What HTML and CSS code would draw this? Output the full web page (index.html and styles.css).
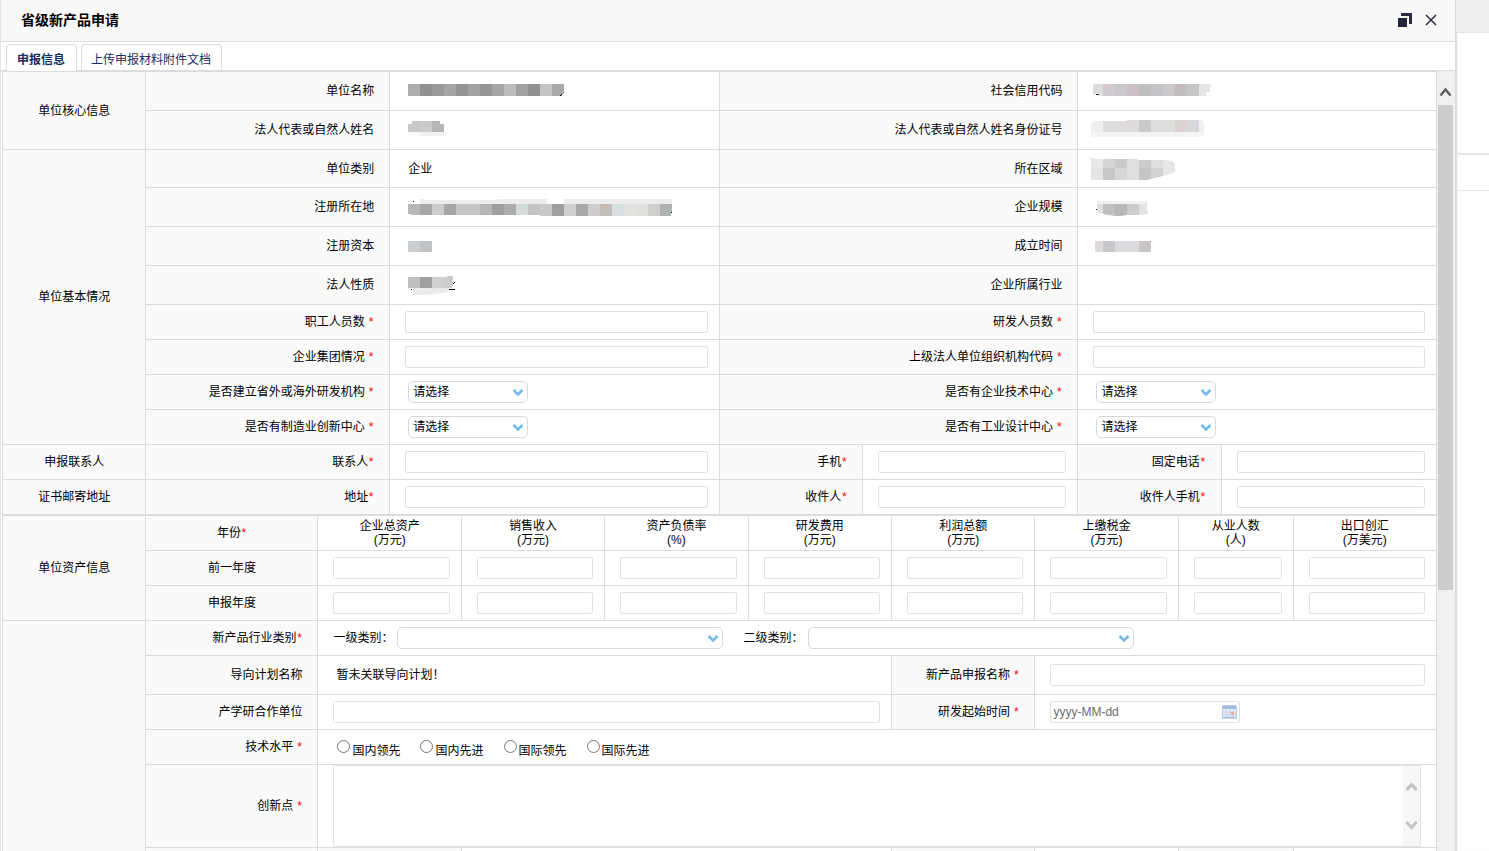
FILE: index.html
```html
<!DOCTYPE html>
<html lang="zh-CN">
<head>
<meta charset="utf-8">
<title>省级新产品申请</title>
<link rel="stylesheet" href="styles.css">
</head>
<body>
<div class="page">
<main class="dialog">
  <header class="dialog-head">
    <h1 class="dialog-title">省级新产品申请</h1>
    <div class="dialog-tools">
      <button class="tool" type="button" aria-label="还原">
        <svg width="14" height="14" viewBox="0 0 14 14"><path d="M3 0h11v11h-3V3H3z" fill="#2b2b3d"/><path d="M0 5h9v9H0z" fill="#23233a"/></svg>
      </button>
      <button class="tool" type="button" aria-label="关闭">
        <svg width="12" height="12" viewBox="0 0 12 12"><path d="M1 1l10 10M11 1L1 11" stroke="#2e2e3e" stroke-width="1.5" fill="none"/></svg>
      </button>
    </div>
  </header>
  <nav class="tabs">
    <button class="tab tab-on" type="button">申报信息</button>
    <button class="tab" type="button">上传申报材料附件文档</button>
  </nav>
  <div class="body">
    <form class="form">
      <table class="grid">
        <colgroup><col class="w10"><col class="w17"><col class="w23"><col class="w10"><col class="w15"><col class="w10"><col class="w15"></colgroup>
        <tr class="tall">
          <th class="group" rowspan="2">单位核心信息</th>
          <th class="label">单位名称</th>
          <td class="masked"><svg class="mosaic" width="280" height="24"><g><path fill="#adadad" d="M5 5h12v12H5z"/><path fill="#919191" d="M17 5h12v12H17z"/><path fill="#999" d="M29 5h12v12H29z"/><path fill="#a5a5a5" d="M41 5h12v12H41z"/><path fill="#949494" d="M53 5h12v12H53z"/><path fill="#a2a2a2" d="M65 5h12v12H65z"/><path fill="#969696" d="M77 5h12v12H77z"/><path fill="#a6a6a6" d="M89 5h12v12H89z"/><path fill="#bcbcbc" d="M101 5h12v12H101z"/><path fill="#a2a2a2" d="M113 5h12v12H113z"/><path fill="#919191" d="M125 5h12v12H125z"/><path fill="#c4c4c4" d="M137 5h12v12H137z"/><path fill="#a8a8a8" d="M149 5h12v10h-2v2H149z"/><path fill="#000" d="M157 16h1v1h-1zM158 15h1v1h-1z"/></g></svg></td>
          <th class="label" colspan="2">社会信用代码</th>
          <td class="masked" colspan="2"><svg class="mosaic" width="130" height="24"><path fill="#dedddf" d="M2 5h10v12H8v-2H2z"/><path fill="#d0cace" d="M12 5h12v12H12z"/><path fill="#c9c7cc" d="M24 5h12v12H24z"/><path fill="#cac0c6" d="M36 5h12v12H36z"/><path fill="#bebebe" d="M48 5h12v12H48z"/><path fill="#c4c4c9" d="M60 5h12v12H60z"/><path fill="#cacaca" d="M72 5h12v12H72z"/><path fill="#c2bcc0" d="M84 5h12v12H84z"/><path fill="#c5c6c8" d="M96 5h12v12H96z"/><path fill="#e5e6e8" d="M108 5h12v3h-1v5h-4v4h-7z"/><path fill="#222" d="M5 15h3v1H5z"/></svg></td>
        </tr>
        <tr class="tall">
          <th class="label">法人代表或自然人姓名</th>
          <td class="masked"><svg class="mosaic" width="280" height="24"><path fill="#c8c8c8" d="M5 6h4V3h8v11H5z"/><path fill="#cacaca" d="M17 3h12v11H17z"/><path fill="#b6b6b6" d="M29 3h8v3h4v8H29z"/><path fill="#fafafa" d="M5 14h12v4H5z"/><path fill="#f0f0f0" d="M17 14h24v4H17z"/></svg></td>
          <th class="label" colspan="2">法人代表或自然人姓名身份证号</th>
          <td class="masked" colspan="2"><svg class="mosaic" width="130" height="24"><path fill="#efeeef" d="M0 6l4-3h8v11H0z"/><path fill="#dcdddc" d="M12 3h24v11H12z"/><path fill="#dfdadc" d="M36 2h12v12H36z"/><path fill="#c8cac9" d="M48 2h12v12H48z"/><path fill="#dedde0" d="M60 2h24v12H60z"/><path fill="#dad3d2" d="M84 2h12v12H84z"/><path fill="#d7d7dc" d="M96 2h12v12H96z"/><path fill="#efefef" d="M108 2h4v5h1v7h-5z"/><path fill="#f4f4f4" d="M0 14h113v3h-1v2H0z"/></svg></td>
        </tr>
        <tr class="mid">
          <th class="group" rowspan="8">单位基本情况</th>
          <th class="label">单位类别</th>
          <td class="value">企业</td>
          <th class="label" colspan="2">所在区域</th>
          <td class="masked" colspan="2"><svg class="mosaic" width="130" height="24"><path fill="#e8e8e8" d="M0 1h3v1h9v9H0z"/><path fill="#d4d4d4" d="M12 2h12v9H12z"/><path fill="#cacaca" d="M24 2h12v9H24z"/><path fill="#dfdfdf" d="M36 2h11v1h1v20H36z"/><path fill="#cdcdcd" d="M48 3h12v8H48z"/><path fill="#dfdfdf" d="M60 3h12v8H60z"/><path fill="#e4e4e4" d="M0 11h12v12H0z"/><path fill="#c8c8c8" d="M12 11h12v12H12z"/><path fill="#d7d7d7" d="M24 11h12v12H24z"/><path fill="#c6c6c6" d="M48 11h12v11l-4 1h-8z"/><path fill="#d2d2d2" d="M60 11h12v8l-12 3z"/><path fill="#e6e6e6" d="M72 3l9 1 3 3v8l-12 4z"/></svg></td>
        </tr>
        <tr class="tall">
          <th class="label">注册所在地</th>
          <td class="masked"><svg class="mosaic" width="280" height="24"><path fill="#ececec" d="M17 4h5v1h72V4h50v5H17zM161 4h108v5H161z"/><path fill="#b8b8b8" d="M5 9h12v11H8v-1H5z"/><path fill="#a8a8a8" d="M17 9h12v11H17z"/><path fill="#ccc" d="M29 9h12v11H29z"/><path fill="#a6a6a6" d="M41 9h12v11H41z"/><path fill="#c5c5c5" d="M53 9h24v11H53z"/><path fill="#b6b6b6" d="M77 9h12v11H77z"/><path fill="#9f9f9f" d="M89 9h12v11H89z"/><path fill="#acacac" d="M101 9h12v11H101z"/><path fill="#d4d9da" d="M113 9h12v11H113z"/><path fill="#c4c4c4" d="M125 9h12v11H125z"/><path fill="#c8c8c8" d="M137 9h12v12H137z"/><path fill="#9f9f9f" d="M149 9h12v12H149z"/><path fill="#cfcfcf" d="M161 9h12v12H161z"/><path fill="#a8a8a8" d="M173 9h12v12H173z"/><path fill="#cecdcb" d="M185 9h12v12H185z"/><path fill="#c3beb8" d="M197 9h12v12H197z"/><path fill="#d8dfe0" d="M209 9h12v12H209z"/><path fill="#e2e3de" d="M221 9h12v12H221z"/><path fill="#dfe1dc" d="M233 9h12v12H233z"/><path fill="#cfcdcd" d="M245 9h12v12H245z"/><path fill="#b0b3b3" d="M257 9h12v9h-1v3H257z"/><path fill="#111" d="M10 6h1v1h-1zM268 17h1v1h-1z"/></svg></td>
          <th class="label" colspan="2">企业规模</th>
          <td class="masked" colspan="2"><svg class="mosaic" width="130" height="24"><path fill="#f1f1f1" d="M6 6h51v3H6z"/><path fill="#e0e0e0" d="M6 9h6v10l-6-1z"/><path fill="#c0c0c0" d="M12 9h12v12l-6-1-6-1z"/><path fill="#b7b7b7" d="M24 9h12v11l-6 1h-6z"/><path fill="#ccc" d="M36 9h12v11H36z"/><path fill="#e2e2e2" d="M48 9h8v7h1v3l-9 1z"/><path fill="#111" d="M5 14h1v1H5z"/></svg></td>
        </tr>
        <tr class="tall">
          <th class="label">注册资本</th>
          <td class="masked"><svg class="mosaic" width="280" height="24"><path fill="#c9cdcf" d="M5 7h12v11H5z"/><path fill="#bfc3c5" d="M17 7h12v11H17z"/></svg></td>
          <th class="label" colspan="2">成立时间</th>
          <td class="masked" colspan="2"><svg class="mosaic" width="130" height="24"><path fill="#dfdbdb" d="M4 7h8v11H4z"/><path fill="#c6c8cc" d="M12 7h12v11H12z"/><path fill="#dbd9db" d="M24 7h12v11H24z"/><path fill="#dadbde" d="M36 7h12v11H36z"/><path fill="#c9c5c7" d="M48 7h12v11H48z"/></svg></td>
        </tr>
        <tr class="tall">
          <th class="label">法人性质</th>
          <td class="masked"><svg class="mosaic" width="280" height="24"><path fill="#ebebeb" d="M9 15h37v4l-15 2-14 1H9z"/><path fill="#c0c0c0" d="M5 4h12v11H5z"/><path fill="#9f9f9f" d="M17 4h12v11H17z"/><path fill="#d0d0d0" d="M29 4h12v11H29z"/><path fill="#ccc" d="M41 4h3V3h6v10l-2 2h-7z"/><path fill="#000" d="M46 16h6v1h-6zM51 9h1v1h-1zM50 10h1v1h-1zM8 16h1v1H8z"/></svg></td>
          <th class="label" colspan="2">企业所属行业</th>
          <td class="value" colspan="2"></td>
        </tr>
        <tr class="row">
          <th class="label"><label for="staff">职工人员数 <i>*</i></label></th>
          <td><input class="field" id="staff" type="text"></td>
          <th class="label" colspan="2"><label for="rd-staff">研发人员数 <i>*</i></label></th>
          <td colspan="2"><input class="field" id="rd-staff" type="text"></td>
        </tr>
        <tr class="row">
          <th class="label"><label for="corp">企业集团情况 <i>*</i></label></th>
          <td><input class="field" id="corp" type="text"></td>
          <th class="label" colspan="2"><label for="parent">上级法人单位组织机构代码 <i>*</i></label></th>
          <td colspan="2"><input class="field" id="parent" type="text"></td>
        </tr>
        <tr class="row">
          <th class="label"><label for="overseas">是否建立省外或海外研发机构 <i>*</i></label></th>
          <td class="value"><span class="pick"><select id="overseas"><option>请选择</option></select><svg width="12" height="9" viewBox="0 0 12 9"><path d="M1.500 2l4.500 4.500L10.500 2"/></svg></span></td>
          <th class="label" colspan="2"><label for="tech">是否有企业技术中心 <i>*</i></label></th>
          <td class="value" colspan="2"><span class="pick"><select id="tech"><option>请选择</option></select><svg width="12" height="9" viewBox="0 0 12 9"><path d="M1.500 2l4.500 4.500L10.500 2"/></svg></span></td>
        </tr>
        <tr class="row">
          <th class="label"><label for="maker">是否有制造业创新中心 <i>*</i></label></th>
          <td class="value"><span class="pick"><select id="maker"><option>请选择</option></select><svg width="12" height="9" viewBox="0 0 12 9"><path d="M1.500 2l4.500 4.500L10.500 2"/></svg></span></td>
          <th class="label" colspan="2"><label for="design">是否有工业设计中心 <i>*</i></label></th>
          <td class="value" colspan="2"><span class="pick"><select id="design"><option>请选择</option></select><svg width="12" height="9" viewBox="0 0 12 9"><path d="M1.500 2l4.500 4.500L10.500 2"/></svg></span></td>
        </tr>
        <tr class="row">
          <th class="group">申报联系人</th>
          <th class="label"><label for="contact">联系人<i>*</i></label></th>
          <td><input class="field" id="contact" type="text"></td>
          <th class="label"><label for="mobile">手机<i>*</i></label></th>
          <td><input class="field" id="mobile" type="text"></td>
          <th class="label"><label for="phone">固定电话<i>*</i></label></th>
          <td><input class="field" id="phone" type="text"></td>
        </tr>
        <tr class="row">
          <th class="group">证书邮寄地址</th>
          <th class="label"><label for="address">地址<i>*</i></label></th>
          <td><input class="field" id="address" type="text"></td>
          <th class="label"><label for="receiver">收件人<i>*</i></label></th>
          <td><input class="field" id="receiver" type="text"></td>
          <th class="label"><label for="receiver-phone">收件人手机<i>*</i></label></th>
          <td><input class="field" id="receiver-phone" type="text"></td>
        </tr>
      </table>
      <table class="grid">
        <colgroup><col class="w10"><col class="w12"><col class="w10"><col class="w10"><col class="w10"><col class="w10"><col class="w10"><col class="w10"><col class="w8"><col class="w10"></colgroup>
        <tr class="row">
          <th class="group" rowspan="3">单位资产信息</th>
          <th class="group">年份<i>*</i></th>
          <th class="head">企业总资产<br>(万元)</th>
          <th class="head">销售收入<br>(万元)</th>
          <th class="head">资产负债率<br>(%)</th>
          <th class="head">研发费用<br>(万元)</th>
          <th class="head">利润总额<br>(万元)</th>
          <th class="head">上缴税金<br>(万元)</th>
          <th class="head">从业人数<br>(人)</th>
          <th class="head">出口创汇<br>(万美元)</th>
        </tr>
        <tr class="row">
          <th class="group">前一年度</th>
          <td><input class="field" type="text" aria-label="前一年度企业总资产"></td>
          <td><input class="field" type="text" aria-label="前一年度销售收入"></td>
          <td><input class="field" type="text" aria-label="前一年度资产负债率"></td>
          <td><input class="field" type="text" aria-label="前一年度研发费用"></td>
          <td><input class="field" type="text" aria-label="前一年度利润总额"></td>
          <td><input class="field" type="text" aria-label="前一年度上缴税金"></td>
          <td><input class="field" type="text" aria-label="前一年度从业人数"></td>
          <td><input class="field" type="text" aria-label="前一年度出口创汇"></td>
        </tr>
        <tr class="row">
          <th class="group">申报年度</th>
          <td><input class="field" type="text" aria-label="申报年度企业总资产"></td>
          <td><input class="field" type="text" aria-label="申报年度销售收入"></td>
          <td><input class="field" type="text" aria-label="申报年度资产负债率"></td>
          <td><input class="field" type="text" aria-label="申报年度研发费用"></td>
          <td><input class="field" type="text" aria-label="申报年度利润总额"></td>
          <td><input class="field" type="text" aria-label="申报年度上缴税金"></td>
          <td><input class="field" type="text" aria-label="申报年度从业人数"></td>
          <td><input class="field" type="text" aria-label="申报年度出口创汇"></td>
        </tr>
        <tr class="row">
          <th class="group" rowspan="6"></th>
          <th class="label">新产品行业类别<i>*</i></th>
          <td colspan="8">
            <div class="cats">
              <div class="cat"><label for="cat1">一级类别：</label><span class="pick pick-wide"><select id="cat1"><option></option></select><svg width="12" height="9" viewBox="0 0 12 9"><path d="M1.500 2l4.500 4.500L10.500 2"/></svg></span></div>
              <div class="cat"><label for="cat2">二级类别：</label><span class="pick pick-wide"><select id="cat2"><option></option></select><svg width="12" height="9" viewBox="0 0 12 9"><path d="M1.500 2l4.500 4.500L10.500 2"/></svg></span></div>
            </div>
          </td>
        </tr>
        <tr class="tall">
          <th class="label">导向计划名称</th>
          <td class="value" colspan="4">暂未关联导向计划！</td>
          <th class="label"><label for="product">新产品申报名称 <i>*</i></label></th>
          <td colspan="3"><input class="field" id="product" type="text"></td>
        </tr>
        <tr class="row">
          <th class="label"><label for="partner">产学研合作单位</label></th>
          <td colspan="4"><input class="field" id="partner" type="text"></td>
          <th class="label"><label for="start">研发起始时间 <i>*</i></label></th>
          <td colspan="3">
            <div class="date">
              <input class="date-input" id="start" type="text" placeholder="yyyy-MM-dd">
              <svg width="15" height="14" viewBox="0 0 15 14"><rect x=".5" y=".5" width="14" height="12" rx="1" fill="#e9effa" stroke="#b9c7e0"/><path d="M1 1h13v3H1z" fill="#a3b9e2"/><path d="M1 7h13M1 10h13M4.500 4v8M8 4v8M11.500 4v8" stroke="#c6d3ea"/><path d="M9 7h3v3H9z" fill="#f0a892"/><path d="M0 13h15" stroke="#9fadcb"/></svg>
            </div>
          </td>
        </tr>
        <tr class="row">
          <th class="label">技术水平 <i>*</i></th>
          <td colspan="8">
            <div class="radios">
              <label class="radio"><input type="radio" name="level"><span>国内领先</span></label>
              <label class="radio"><input type="radio" name="level"><span>国内先进</span></label>
              <label class="radio"><input type="radio" name="level"><span>国际领先</span></label>
              <label class="radio"><input type="radio" name="level"><span>国际先进</span></label>
            </div>
          </td>
        </tr>
        <tr class="area-row">
          <th class="label"><label for="idea">创新点 <i>*</i></label></th>
          <td class="area-cell" colspan="8">
            <div class="area">
              <textarea id="idea"></textarea>
              <div class="area-bar">
                <svg width="13" height="10" viewBox="0 0 13 10"><path d="M1.500 8l5-5.500 5 5.500"/></svg>
                <svg width="13" height="10" viewBox="0 0 13 10"><path d="M1.500 2l5 5.500 5-5.500"/></svg>
              </div>
            </div>
          </td>
        </tr>
        <tr class="row">
          <th class="label"></th>
          <th class="label"></th>
          <td colspan="3"></td>
          <th class="label"></th>
          <td></td>
          <th class="label"></th>
          <td></td>
        </tr>
      </table>
    </form>
    <div class="scroll">
      <svg width="13" height="10" viewBox="0 0 13 10"><path d="M1.500 8.500l5-6 5 6" fill="none" stroke="#606060" stroke-width="2.500"/></svg>
      <div class="thumb"></div>
    </div>
  </div>
</main>
<aside class="behind">
  <div class="behind-head"></div>
  <div class="behind-gap"></div>
  <div class="behind-row"></div>
</aside>
</div>
</body>
</html>
```
FILE: styles.css
```css
* { box-sizing: border-box; }
body {
  margin: 0;
  font: 12px/14px "Liberation Sans", "Noto Sans CJK SC", sans-serif;
  color: #000;
  background: #fff;
}
button, input, select, textarea { font: inherit; color: inherit; margin: 0; }
.page { display: flex; height: 100vh; overflow: hidden; }

.dialog {
  flex: 1;
  min-width: 0;
  display: flex;
  flex-direction: column;
  border-left: 1px solid #e4e4e4;
  border-right: 1px solid #dcdcdc;
  background: #fff;
}
.dialog-head {
  flex: none;
  display: flex;
  align-items: center;
  justify-content: space-between;
  height: 42px;
  padding: 0 18px 2px 20px;
  background: #f8f8f8;
  border-bottom: 1px solid #dcdcdc;
}
.dialog-title { margin: 0; font-size: 14px; line-height: 20px; font-weight: 700; }
.dialog-tools { display: flex; align-items: center; gap: 13px; }
.tool { display: flex; padding: 0; border: 0; background: none; }

.tabs {
  flex: none;
  display: flex;
  align-items: flex-end;
  gap: 4px;
  height: 29px;
  padding-left: 5px;
  border-bottom: 1px solid #dcdcdc;
}
.tab {
  height: 26px;
  padding: 4px 10px 0 9px;
  border: 1px solid #dcdcdc;
  border-bottom: 0;
  border-radius: 4px 4px 0 0;
  background: #fff;
  color: #12305f;
}
.tab-on { height: 27px; margin-bottom: -1px; padding: 3px 11px 0 10px; font-weight: 700; }

.body { flex: 1; min-height: 0; display: flex; }
.form { flex: 1; min-width: 0; overflow: hidden; padding-left: 1px; }

.grid { width: 100%; table-layout: fixed; border-collapse: collapse; }
.grid th, .grid td { border: 1px solid #dcdcdc; padding: 0 11px 0 15px; font-weight: 400; text-align: left; }
.grid th { background: #fafafa; }
.grid .label { padding: 0 15px 0 0; text-align: right; white-space: nowrap; }
.grid .group { padding: 0; text-align: center; }
.grid .head { padding: 0; text-align: center; background: #fff; }
.grid .value { padding-left: 18px; }
.grid .masked { padding: 0 0 0 13px; }
.grid i { display: inline-block; width: 6px; text-align: center; font-style: normal; color: #f00; }
.row { height: 35px; }
.mid { height: 38px; }
.tall { height: 39px; }
.area-row { height: 83px; }
.w8 { width: 8%; }
.w10 { width: 10%; }
.w12 { width: 12%; }
.w15 { width: 15%; }
.w17 { width: 17%; }
.w23 { width: 23%; }

.mosaic { display: block; }
.field {
  display: block;
  width: 100%;
  height: 22px;
  padding: 0 4px;
  border: 1px solid #e2e2e2;
  border-radius: 2px;
  background: #fff;
}
.pick { position: relative; display: block; width: 120px; }
.pick select {
  display: block;
  width: 100%;
  height: 22px;
  padding: 0 4px;
  border: 1px solid #d8d8d8;
  border-radius: 5px;
  background: #fff;
  appearance: none;
}
.pick svg { position: absolute; right: 4px; top: 7px; pointer-events: none; }
.pick path { fill: none; stroke: #74b9ec; stroke-width: 2.5; }
.pick-wide { width: 326px; }
.cats { display: flex; gap: 20px; }
.cat { display: flex; align-items: center; gap: 4px; }

.date {
  display: flex;
  align-items: center;
  width: 190px;
  height: 22px;
  padding: 0 2px;
  border: 1px solid #e2e2e2;
  border-radius: 2px;
}
.date-input { flex: 1; min-width: 0; height: 20px; padding: 0; border: 0; background: none; }
.date-input::placeholder { color: #6c6c6c; }

.radios { display: flex; gap: 20px; padding: 4px 0 0 4px; }
.radio { display: flex; align-items: flex-start; gap: 2px; }
.radio input { width: 13px; height: 13px; }
.radio span { padding-top: 4px; }

.grid .area-cell { padding: 0 15px; }
.area { display: flex; height: 82px; border: 1px solid #e2e2e2; border-radius: 2px; }
.area textarea { flex: 1; min-width: 0; padding: 4px; border: 0; resize: none; background: #fff; }
.area-bar {
  display: flex;
  flex-direction: column;
  align-items: center;
  justify-content: space-between;
  width: 17px;
  padding: 16px 0;
  background: #f7f7f7;
}
.area-bar path { fill: none; stroke: #c2c2c2; stroke-width: 3; }

.scroll {
  flex: none;
  display: flex;
  flex-direction: column;
  align-items: center;
  gap: 8px;
  width: 18px;
  padding: 16px 2px 0 0;
  background: #f0f0f0;
}
.scroll svg { flex: none; }
.thumb { width: 15px; height: 485px; max-height: 64%; background: #cdcdcd; }

.behind { flex: none; width: 33px; box-shadow: inset 2px 0 2px -1px #d8d8d8; }
.behind-head { height: 33px; background: #eee; border-bottom: 1px solid #e4e4e4; }
.behind-gap { height: 122px; border-bottom: 2px solid #e6e6e6; }
.behind-row { height: 36px; border-bottom: 1px solid #e8e8e8; }
```
